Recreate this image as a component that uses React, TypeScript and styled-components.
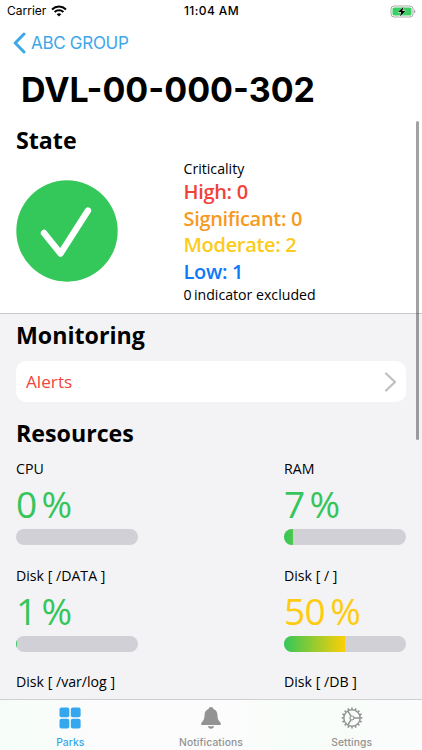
import React from "react";
import styled, { createGlobalStyle } from "styled-components";

const GlobalStyle = createGlobalStyle`
  * { box-sizing: border-box; }
  html, body { margin: 0; height: 100%; background: #f2f2f6; }
  #root { height: 100%; }
`;

const Screen = styled.div`
  position: relative;
  width: 422px;
  height: 750px;
  overflow: hidden;
  display: flex;
  flex-direction: column;
  background: #f3f3f6;
  color: #000;
  font-family: "Open Sans", sans-serif;
`;

const Header = styled.header`
  background: #fff;
  height: 124px;
  flex: none;
  font-family: Inter, sans-serif;
`;

const StatusBar = styled.div`
  display: grid;
  grid-template-columns: 1fr auto 1fr;
  align-items: center;
  height: 22px;
  padding: 0 6px 0 7px;
  font-size: 12px;
  line-height: 22px;
`;

const Carrier = styled.div`
  display: flex;
  align-items: center;
  gap: 5px;
  font-size: 12px;
`;

const Clock = styled.div`
  font-weight: 500;
  font-size: 12px;
  letter-spacing: 0.4px;
`;

const BatterySlot = styled.div`
  display: flex;
  justify-content: flex-end;
`;

const BackLink = styled.a`
  display: flex;
  align-items: center;
  gap: 5px;
  height: 42px;
  padding-left: 13px;
  color: #3ea7ea;
  font-size: 17px;
  letter-spacing: -0.3px;
`;

const Title = styled.h1`
  margin: 4px 0 0 21px;
  font-size: 34px;
  line-height: 44px;
  font-weight: 700;
`;

const Heading = styled.h2`
  margin: 0;
  font-size: 23.2px;
  line-height: 32px;
  font-weight: 700;
`;

const StateSection = styled.section`
  flex: none;
  height: 190px;
  padding: 0 16px;
  background: #fff;
  border-bottom: 1px solid #c9c9cc;
`;

const StateBody = styled.div`
  display: grid;
  grid-template-columns: 167.5px 1fr;
`;

const StateIcon = styled.svg`
  display: block;
  margin: 24px 0 0 -0.5px;
`;

const Criticality = styled.div`
  padding-top: 3px;
`;

const Caption = styled.div`
  font-size: 14.15px;
  line-height: 20px;
  white-space: pre;
`;

const Level = styled.div<{ $color: string }>`
  color: ${(p) => p.$color};
  font-size: 20px;
  line-height: 26.5px;
  font-weight: 600;
  letter-spacing: -0.32px;
`;

const Content = styled.main`
  flex: 1;
  min-height: 0;
  padding: 5px 16px 0;
`;

const AlertsRow = styled.a`
  display: flex;
  align-items: center;
  justify-content: space-between;
  height: 41px;
  margin: 10px 0 15px;
  padding: 0 9px 0 10px;
  border-radius: 10px;
  background: #fff;
  color: #f0453d;
  font-size: 17.2px;
`;

const Resources = styled.div`
  display: grid;
  grid-template-columns: 122px 122px;
  justify-content: space-between;
`;

const Resource = styled.div`
  height: 106.5px;
  padding-top: 10px;
`;

const Value = styled.div<{ $color: string }>`
  color: ${(p) => p.$color};
  font-size: 37px;
  line-height: 49px;
  word-spacing: -4px;
  letter-spacing: -0.6px;
  white-space: nowrap;
`;

const Track = styled.div`
  height: 16px;
  margin-top: 1px;
  border-radius: 8px;
  overflow: hidden;
  background: #d1d0d6;
`;

const Fill = styled.div<{ $to: string }>`
  height: 100%;
  background: linear-gradient(90deg, #34c759, ${(p) => p.$to});
`;

const TabBar = styled.nav`
  flex: none;
  display: grid;
  grid-template-columns: repeat(3, 1fr);
  height: 51px;
  border-top: 1px solid #cdcfd0;
  background: linear-gradient(90deg, #f6fdf8, #fcfcfc 25%, #fcfcfc 55%, #f7fdf8 70%, #fbfcfc);
  font-family: Inter, sans-serif;
`;

const Tab = styled.a<{ $active?: boolean }>`
  display: flex;
  flex-direction: column;
  align-items: center;
  padding-top: 7px;
  color: ${(p) => (p.$active ? "#35a7ee" : "#939393")};
  font-size: 10.3px;
  line-height: 14px;
  font-weight: 500;
  letter-spacing: 0.1px;
  svg { margin-bottom: 6px; }
`;

const ScrollThumb = styled.div`
  position: absolute;
  top: 121px;
  right: 3px;
  width: 3.5px;
  height: 319px;
  border-radius: 2px;
  background: rgba(0, 0, 0, 0.36);
`;

const GREEN = "#36c55b";
const YELLOW = "#fecb10";

const levels = [
  { label: "High: 0", color: "#f0433a" },
  { label: "Significant: 0", color: "#f79a22" },
  { label: "Moderate: 2", color: "#fbcb1e" },
  { label: "Low: 1", color: "#0f7af5" },
];

const resources = [
  { name: "CPU", value: 0, color: GREEN, end: GREEN },
  { name: "RAM", value: 7, color: GREEN, end: "#50c74b" },
  { name: "Disk [ /DATA ]", value: 1, color: GREEN, end: GREEN },
  { name: "Disk [ / ]", value: 50, color: YELLOW, end: "#fccf06" },
  { name: "Disk [ /var/log ]" },
  { name: "Disk [ /DB ]" },
];

const Wifi = () => (
  <svg width="16" height="12" viewBox="0 0 16 12" fill="none" stroke="#000" strokeWidth="2">
    <path d="M1 4.4a10.2 10.2 0 0 1 14 0" />
    <path d="M3.6 7.1a6.4 6.4 0 0 1 8.8 0" />
    <path d="M8 11.5 5.7 9.2a3.4 3.4 0 0 1 4.6 0z" fill="#000" stroke="none" />
  </svg>
);

const Battery = () => (
  <svg width="26" height="13" viewBox="0 0 26 13">
    <rect x="1" y="1" width="22" height="11" rx="3" fill="#fff" stroke="#a9a9a9" />
    <rect x="2.5" y="2.5" width="19" height="8" rx="1.6" fill="#39cf62" />
    <path d="M24 4.6q1.4.6 1.4 1.9T24 8.4z" fill="#a9a9a9" />
    <path d="M13.5 1.8 8.1 7.1h3.1L10 11.4l5.4-5.5h-3.1z" fill="#000" stroke="#fff" strokeWidth=".8" paintOrder="stroke" />
  </svg>
);

const gearTeeth = Array.from({ length: 16 }, (_, i) => i * 22.5);

const Gear = () => (
  <svg width="22" height="22" viewBox="-11 -11 22 22" fill="none" stroke="currentColor" strokeWidth="1.5">
    <circle r="8.2" />
    <circle r="2" strokeWidth="1.2" />
    <path d="M2 0H8M-1-1.8-4.2-7.2M-1 1.8-4.2 7.2" />
    {gearTeeth.map((a) => (
      <path key={a} d="M8.5 0H10.4" strokeWidth="1.6" transform={`rotate(${a})`} />
    ))}
  </svg>
);

export default function App() {
  return (
    <Screen>
      <GlobalStyle />
      <Header>
        <StatusBar>
          <Carrier>
            Carrier
            <Wifi />
          </Carrier>
          <Clock>11:04 AM</Clock>
          <BatterySlot>
            <Battery />
          </BatterySlot>
        </StatusBar>
        <BackLink>
          <svg width="13" height="22" viewBox="0 0 13 22" fill="none" stroke="currentColor" strokeWidth="3" strokeLinecap="round" strokeLinejoin="round">
            <path d="M11 2 2.2 11 11 20" />
          </svg>
          ABC GROUP
        </BackLink>
        <Title>DVL-00-000-302</Title>
      </Header>
      <StateSection>
        <Heading>State</Heading>
        <StateBody>
          <StateIcon width="102" height="102" viewBox="0 0 102 102">
            <circle cx="51" cy="51" r="50.7" fill="#34c759" />
            <path d="M28 53 44.5 73.5 72 30.5" fill="none" stroke="#fff" strokeWidth="6.4" strokeLinecap="round" strokeLinejoin="round" />
          </StateIcon>
          <Criticality>
            <Caption>Criticality</Caption>
            {levels.map((l) => (
              <Level key={l.label} $color={l.color}>{l.label}</Level>
            ))}
            <Caption>{"0\u2009indicator excluded"}</Caption>
          </Criticality>
        </StateBody>
      </StateSection>
      <Content>
        <Heading>Monitoring</Heading>
        <AlertsRow>
          Alerts
          <svg width="13" height="20" viewBox="0 0 13 20" fill="none" stroke="#bfbfc2" strokeWidth="2.2" strokeLinecap="round" strokeLinejoin="round">
            <path d="M2 1.5 11 10 2 18.5" />
          </svg>
        </AlertsRow>
        <Heading>Resources</Heading>
        <Resources>
          {resources.map((r) => (
            <Resource key={r.name}>
              <Caption>{r.name}</Caption>
              {r.value !== undefined && (
                <>
                  <Value $color={r.color}>{r.value} %</Value>
                  <Track>
                    <Fill $to={r.end} style={{ width: `${r.value}%` }} />
                  </Track>
                </>
              )}
            </Resource>
          ))}
        </Resources>
      </Content>
      <TabBar>
        <Tab $active>
          <svg width="22" height="22" viewBox="0 0 22 22" fill="currentColor">
            <rect x="0.5" y="0.5" width="9.8" height="9.8" rx="2" />
            <rect x="11.8" y="0.5" width="9.8" height="9.8" rx="2" />
            <rect x="0.5" y="11.8" width="9.8" height="9.8" rx="2" />
            <rect x="11.8" y="11.8" width="9.8" height="9.8" rx="2" />
          </svg>
          Parks
        </Tab>
        <Tab>
          <svg width="22" height="22" viewBox="0 0 22 22" fill="currentColor">
            <path d="M11 0C9.7 0 8.8.8 8.6 2 5.600 3 4.600 5.500 4.500 8.500 4.400 12.400 3.300 13.600 1.700 15.400.6 16.700 1 18 2.500 18h17c1.500 0 1.900-1.300.8-2.600-1.600-1.800-2.700-3-2.800-6.900C17.400 5.500 16.400 3 13.400 2 13.200.8 12.300 0 11 0z" />
            <path d="M7.8 19.2h6.400c-.3 1.500-1.600 2.500-3.200 2.500s-2.900-1-3.200-2.500z" />
          </svg>
          Notifications
        </Tab>
        <Tab>
          <Gear />
          Settings
        </Tab>
      </TabBar>
      <ScrollThumb />
    </Screen>
  );
}
